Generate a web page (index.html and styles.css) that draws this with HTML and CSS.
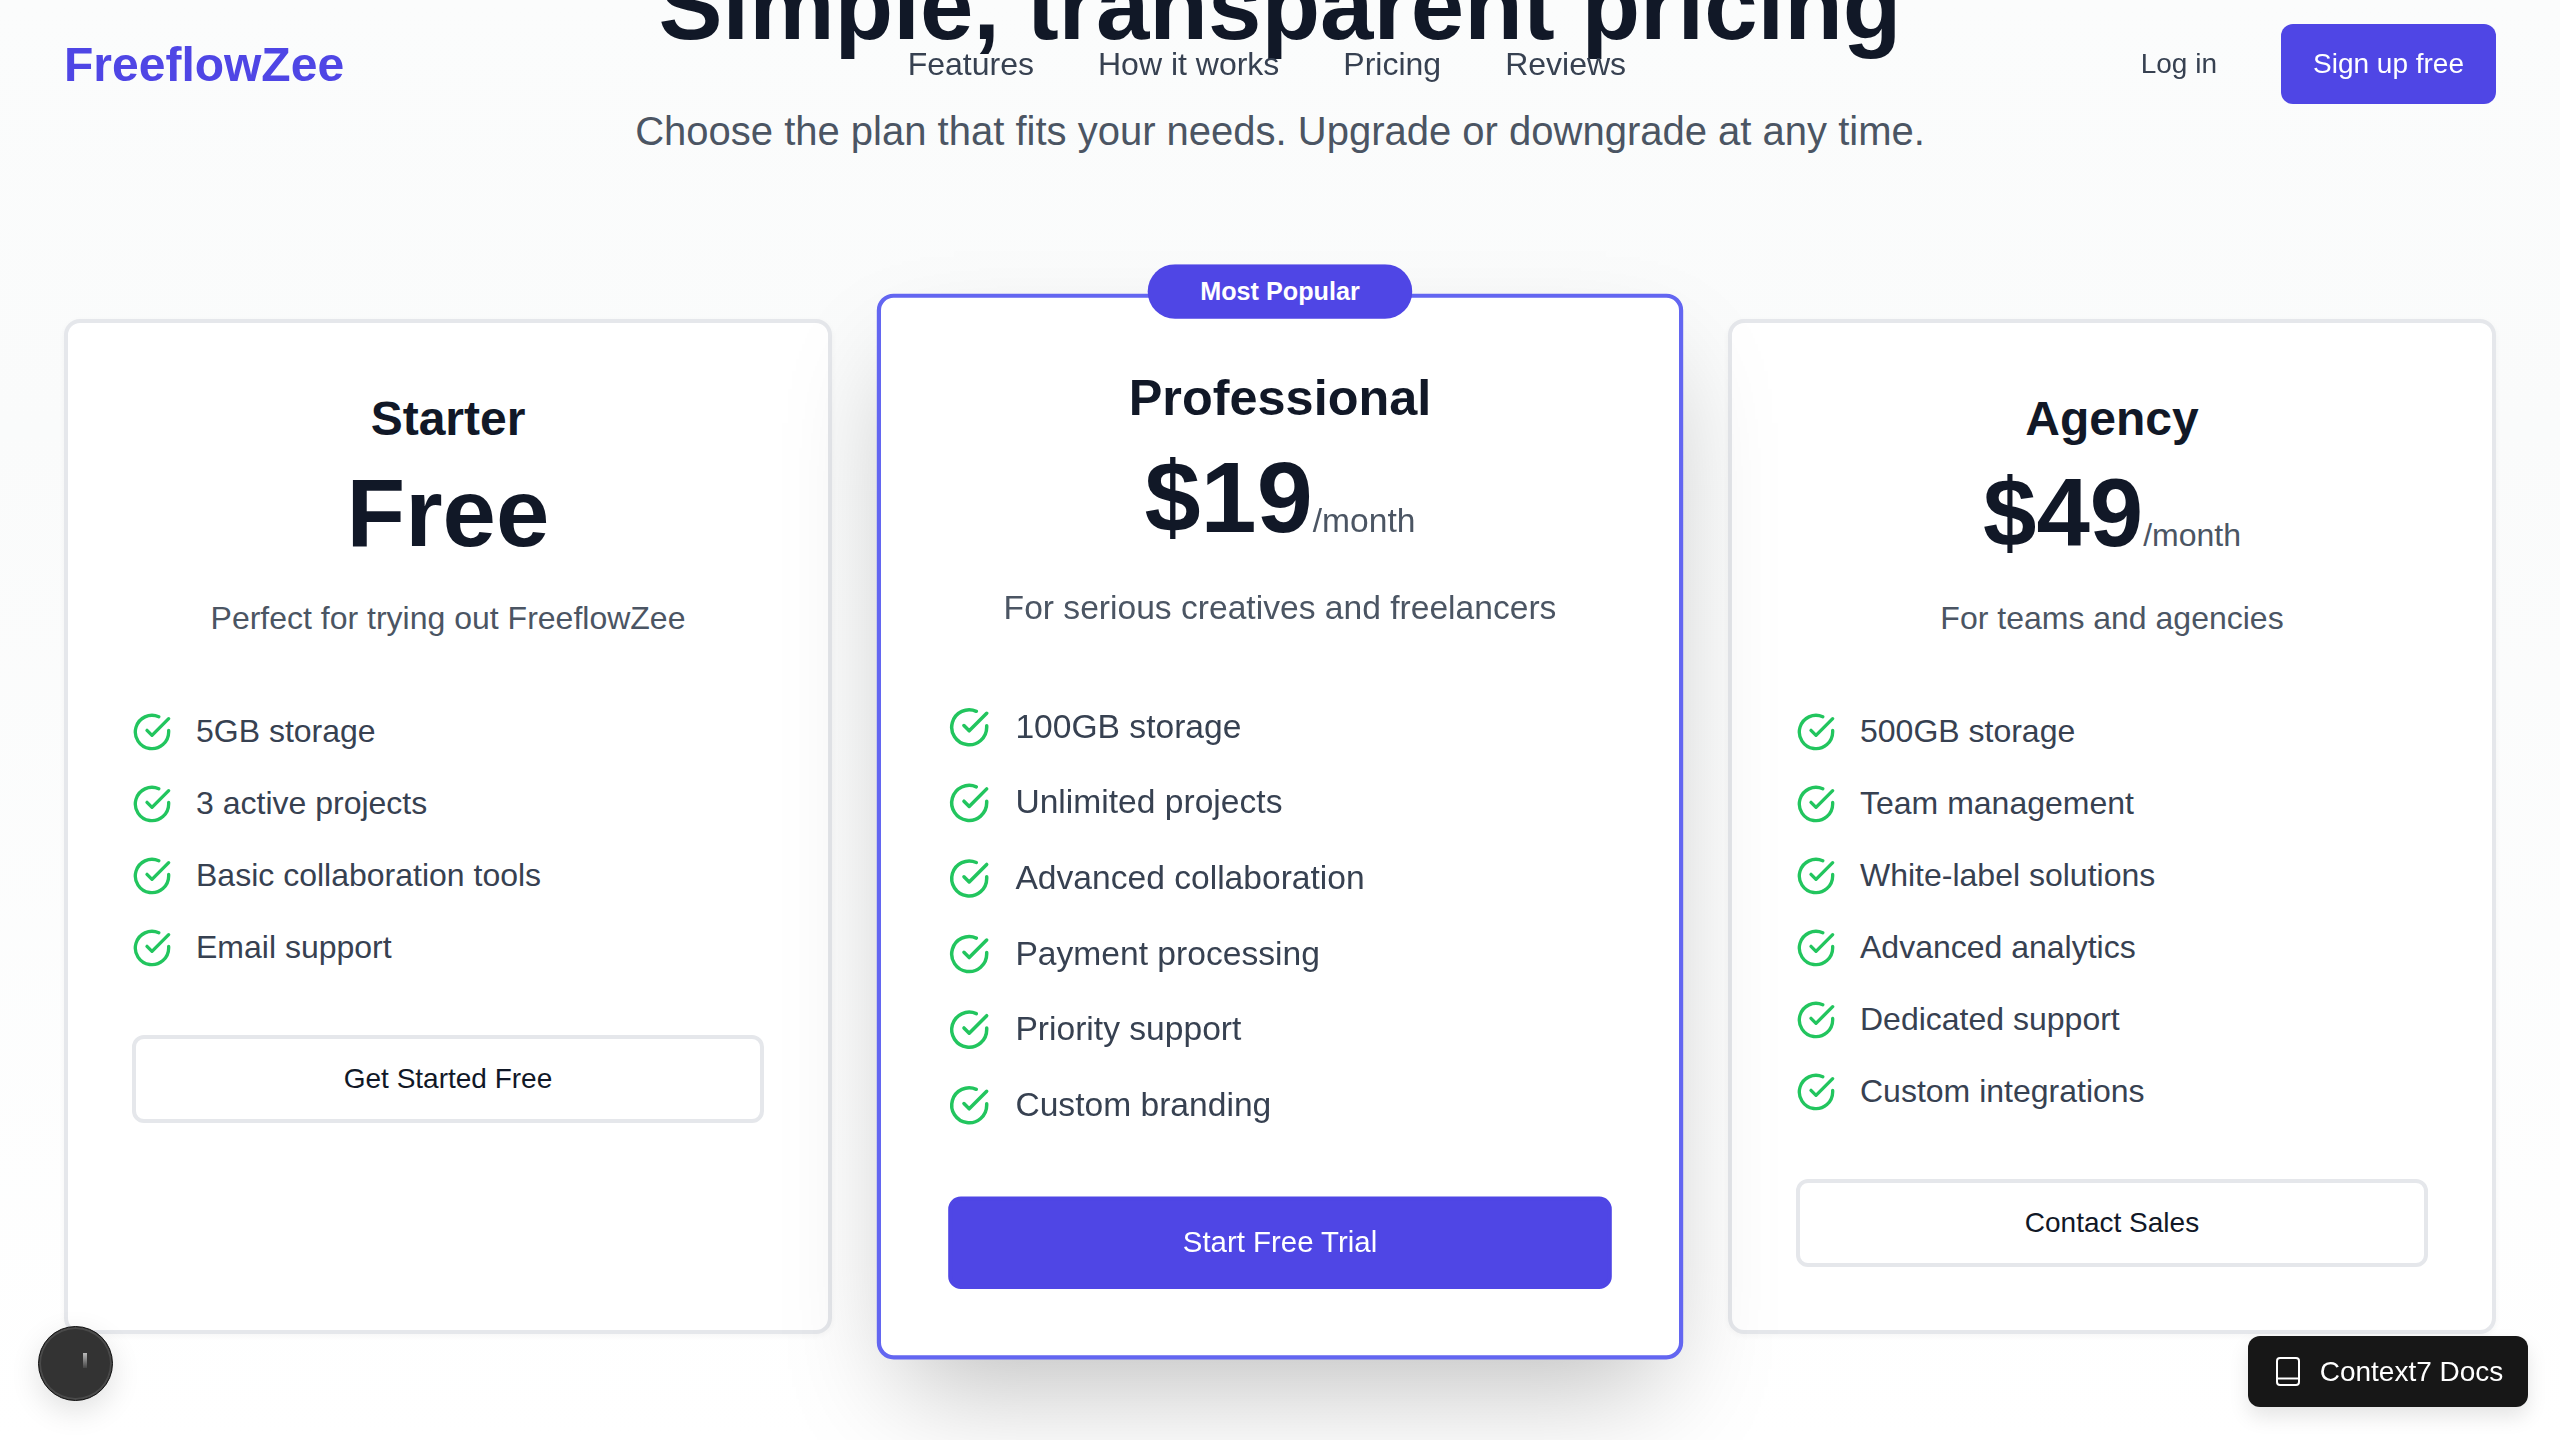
FILE: index.html
```html
<!DOCTYPE html>
<html lang="en">
<head>
    <meta charset="UTF-8" />
    <meta name="viewport" content="width=device-width, initial-scale=1.0" />
    <title>FreeflowZee Pricing</title>
    <link rel="stylesheet" href="styles.css">
</head>
<body>

<header class="site-header">
    <a class="logo" href="#">FreeflowZee</a>
    <nav class="main-nav">
        <a href="#">Features</a>
        <a href="#">How it works</a>
        <a href="#">Pricing</a>
        <a href="#">Reviews</a>
    </nav>
    <div class="header-actions">
        <a class="login" href="#">Log in</a>
        <a class="signup" href="#">Sign up free</a>
    </div>
</header>

<main class="pricing">
    <div class="pricing-head">
        <h1>Simple, transparent pricing</h1>
        <p>Choose the plan that fits your needs. Upgrade or downgrade at any time.</p>
    </div>

    <div class="plans">
        <!-- Starter -->
        <section class="plan">
            <h2>Starter</h2>
            <div class="price">Free</div>
            <p class="plan-desc">Perfect for trying out FreeflowZee</p>
            <ul class="features">
                <li><svg class="check" viewBox="0 0 24 24"><path d="M22 11.08V12a10 10 0 1 1-5.93-9.14"/><path d="M22 4 12 14.01l-3-3"/></svg>5GB storage</li>
                <li><svg class="check" viewBox="0 0 24 24"><path d="M22 11.08V12a10 10 0 1 1-5.93-9.14"/><path d="M22 4 12 14.01l-3-3"/></svg>3 active projects</li>
                <li><svg class="check" viewBox="0 0 24 24"><path d="M22 11.08V12a10 10 0 1 1-5.93-9.14"/><path d="M22 4 12 14.01l-3-3"/></svg>Basic collaboration tools</li>
                <li><svg class="check" viewBox="0 0 24 24"><path d="M22 11.08V12a10 10 0 1 1-5.93-9.14"/><path d="M22 4 12 14.01l-3-3"/></svg>Email support</li>
            </ul>
            <a class="plan-btn" href="#">Get Started Free</a>
        </section>

        <!-- Professional -->
        <section class="plan plan-popular">
            <span class="badge">Most Popular</span>
            <h2>Professional</h2>
            <div class="price">$19<span class="period">/month</span></div>
            <p class="plan-desc">For serious creatives and freelancers</p>
            <ul class="features">
                <li><svg class="check" viewBox="0 0 24 24"><path d="M22 11.08V12a10 10 0 1 1-5.93-9.14"/><path d="M22 4 12 14.01l-3-3"/></svg>100GB storage</li>
                <li><svg class="check" viewBox="0 0 24 24"><path d="M22 11.08V12a10 10 0 1 1-5.93-9.14"/><path d="M22 4 12 14.01l-3-3"/></svg>Unlimited projects</li>
                <li><svg class="check" viewBox="0 0 24 24"><path d="M22 11.08V12a10 10 0 1 1-5.93-9.14"/><path d="M22 4 12 14.01l-3-3"/></svg>Advanced collaboration</li>
                <li><svg class="check" viewBox="0 0 24 24"><path d="M22 11.08V12a10 10 0 1 1-5.93-9.14"/><path d="M22 4 12 14.01l-3-3"/></svg>Payment processing</li>
                <li><svg class="check" viewBox="0 0 24 24"><path d="M22 11.08V12a10 10 0 1 1-5.93-9.14"/><path d="M22 4 12 14.01l-3-3"/></svg>Priority support</li>
                <li><svg class="check" viewBox="0 0 24 24"><path d="M22 11.08V12a10 10 0 1 1-5.93-9.14"/><path d="M22 4 12 14.01l-3-3"/></svg>Custom branding</li>
            </ul>
            <a class="plan-btn plan-btn-primary" href="#">Start Free Trial</a>
        </section>

        <!-- Agency -->
        <section class="plan">
            <h2>Agency</h2>
            <div class="price">$49<span class="period">/month</span></div>
            <p class="plan-desc">For teams and agencies</p>
            <ul class="features">
                <li><svg class="check" viewBox="0 0 24 24"><path d="M22 11.08V12a10 10 0 1 1-5.93-9.14"/><path d="M22 4 12 14.01l-3-3"/></svg>500GB storage</li>
                <li><svg class="check" viewBox="0 0 24 24"><path d="M22 11.08V12a10 10 0 1 1-5.93-9.14"/><path d="M22 4 12 14.01l-3-3"/></svg>Team management</li>
                <li><svg class="check" viewBox="0 0 24 24"><path d="M22 11.08V12a10 10 0 1 1-5.93-9.14"/><path d="M22 4 12 14.01l-3-3"/></svg>White-label solutions</li>
                <li><svg class="check" viewBox="0 0 24 24"><path d="M22 11.08V12a10 10 0 1 1-5.93-9.14"/><path d="M22 4 12 14.01l-3-3"/></svg>Advanced analytics</li>
                <li><svg class="check" viewBox="0 0 24 24"><path d="M22 11.08V12a10 10 0 1 1-5.93-9.14"/><path d="M22 4 12 14.01l-3-3"/></svg>Dedicated support</li>
                <li><svg class="check" viewBox="0 0 24 24"><path d="M22 11.08V12a10 10 0 1 1-5.93-9.14"/><path d="M22 4 12 14.01l-3-3"/></svg>Custom integrations</li>
            </ul>
            <a class="plan-btn" href="#">Contact Sales</a>
        </section>
    </div>
</main>

<!-- Floating widgets -->
<div class="dev-orb"><span class="orb-tick"></span></div>
<a class="docs-btn" href="#">
    <svg class="book" viewBox="0 0 24 29"><rect x="1" y="1" width="22" height="27" rx="3"/><path d="M1 21.5h22"/></svg>
    Context7 Docs
</a>

</body>
</html>
```

FILE: styles.css
```css
* {
    box-sizing: border-box;
}
html, body {
    height: 100%;
}
body {
    margin: 0;
    height: 1440px;
    overflow: hidden;
    font-family: "Liberation Sans", Arial, sans-serif;
    background: linear-gradient(180deg, #fbfcfc 0%, #fafbfb 30%, #ffffff 100%);
    color: #111827;
}
a {
    text-decoration: none;
    color: inherit;
}

/* Header sits on top of the scrolled page */
.site-header {
    position: fixed;
    top: 0;
    left: 0;
    right: 0;
    height: 128px;
    padding: 0 64px;
    display: flex;
    align-items: center;
    justify-content: space-between;
    z-index: 10;
}
.logo {
    font-size: 48px;
    font-weight: 700;
    color: #4f46e5;
}
.main-nav {
    display: flex;
    gap: 64px;
    margin-left: 49px;
    font-size: 32px;
    color: #374151;
}
.header-actions {
    display: flex;
    align-items: center;
    gap: 64px;
    font-size: 28px;
}
.login {
    color: #374151;
}
.signup {
    background: #4f46e5;
    color: #fff;
    height: 80px;
    padding: 0 32px;
    border-radius: 12px;
    display: flex;
    align-items: center;
}

/* Pricing */
.pricing {
    padding: 0 64px;
    margin-top: -42px;
}
.pricing-head {
    text-align: center;
}
.pricing-head h1 {
    margin: 0;
    font-size: 96px;
    line-height: 96px;
    font-weight: 700;
    color: #111827;
}
.pricing-head p {
    margin: 49px 0 0;
    font-size: 40px;
    line-height: 56px;
    color: #4b5563;
}
.plans {
    margin-top: 160px;
    display: grid;
    grid-template-columns: repeat(3, 1fr);
    gap: 64px;
}
.plan {
    position: relative;
    background: #fff;
    border: 4px solid #e5e7eb;
    border-radius: 16px;
    padding: 64px 64px 63px;
    box-shadow: 0 2px 6px rgba(0,0,0,0.04);
    text-align: center;
}
.plan-popular {
    border-color: #6366f1;
    transform: scale(1.05);
    box-shadow: 0 50px 100px -24px rgba(0,0,0,0.25);
    z-index: 1;
}
.badge {
    position: absolute;
    top: -32px;
    left: 50%;
    transform: translateX(-50%);
    background: #4f46e5;
    color: #fff;
    font-size: 24px;
    line-height: 32px;
    font-weight: 700;
    padding: 10px 50px;
    border-radius: 999px;
    white-space: nowrap;
}
.plan h2 {
    margin: 0;
    font-size: 48px;
    line-height: 64px;
    font-weight: 700;
}
.price {
    margin-top: 14px;
    font-size: 96px;
    line-height: 96px;
    font-weight: 700;
}
.period {
    font-size: 32px;
    line-height: 1;
    font-weight: 400;
    color: #4b5563;
}
.plan-desc {
    margin: 33px 0 0;
    font-size: 32px;
    line-height: 48px;
    color: #4b5563;
}
.features {
    list-style: none;
    margin: 65px 0 0;
    padding: 0;
    text-align: left;
}
.features li {
    display: flex;
    align-items: center;
    gap: 24px;
    font-size: 32px;
    line-height: 48px;
    color: #374151;
    margin-bottom: 24px;
}
.check {
    width: 40px;
    height: 40px;
    margin-top: 2px;
    flex: none;
    fill: none;
    stroke: #22c55e;
    stroke-width: 2;
    stroke-linecap: round;
    stroke-linejoin: round;
}
.plan-btn {
    display: flex;
    align-items: center;
    justify-content: center;
    height: 88px;
    margin-top: 64px;
    border: 4px solid #e5e7eb;
    border-radius: 12px;
    background: #fff;
    font-size: 28px;
    color: #111827;
}
.plan-btn-primary {
    background: #4f46e5;
    border-color: #4f46e5;
    color: #fff;
}

/* Floating widgets */
.dev-orb {
    position: fixed;
    left: 38px;
    bottom: 39px;
    width: 75px;
    height: 75px;
    border-radius: 50%;
    background: #333;
    border: 1px solid #111;
    box-shadow: inset 0 0 0 2px #4a4a4a, 0 10px 30px rgba(0,0,0,0.12);
    z-index: 20;
}
.orb-tick {
    position: absolute;
    left: 44px;
    top: 26px;
    width: 4px;
    height: 15px;
    background: linear-gradient(180deg, #bbb, #444);
}
.docs-btn {
    position: fixed;
    right: 32px;
    bottom: 33px;
    width: 280px;
    height: 71px;
    padding-left: 3px;
    display: flex;
    align-items: center;
    justify-content: center;
    gap: 20px;
    background: #171717;
    color: #fff;
    font-size: 28px;
    border-radius: 12px;
    box-shadow: 0 10px 20px rgba(0,0,0,0.1);
    z-index: 20;
}
.book {
    width: 24px;
    height: 29px;
    fill: none;
    stroke: #fff;
    stroke-width: 2;
}
```
